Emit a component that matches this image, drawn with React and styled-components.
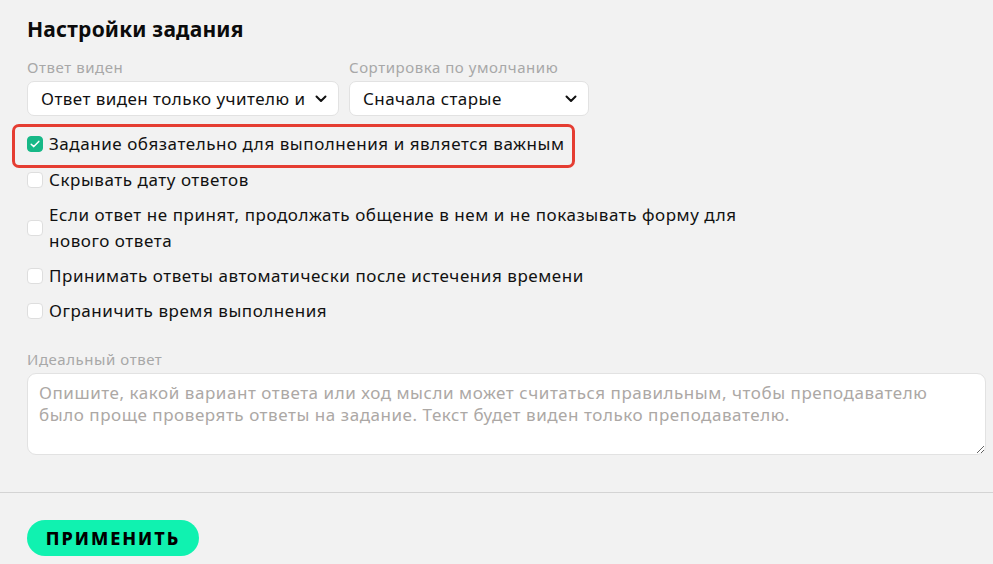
import React from 'react'
import styled, { createGlobalStyle } from "styled-components";

const GlobalStyle = createGlobalStyle`
    html, body {
        margin: 0;
        padding: 0;
        background: #f2f2f2;
    }
    body {
        font-family: "Noto Sans", "Open Sans", sans-serif;
        color: #111;
    }
`

const options = [
    { text: "Скрывать дату ответов" },
    { text: "Если ответ не принят, продолжать общение в нем и не показывать форму для нового ответа" },
    { text: "Принимать ответы автоматически после истечения времени" },
    { text: "Ограничить время выполнения" },
]

function Chevron() {
    return (
        <svg width="12" height="8" viewBox="0 0 12 8" fill="none">
            <path d="M1.5 1.5L6 6l4.5-4.5" stroke="#111" strokeWidth="2" strokeLinecap="round" strokeLinejoin="round" />
        </svg>
    )
}

function Check({ checked }) {
    return (
        <Box $checked={checked}>
            {checked && (
                <svg width="10" height="8" viewBox="0 0 10 8" fill="none">
                    <path d="M1.2 4.2L3.8 6.6 8.8 1.4" stroke="#fff" strokeWidth="1.5" strokeLinecap="round" strokeLinejoin="round" />
                </svg>
            )}
        </Box>
    )
}

function App() {
    return (
        <Page>
            <GlobalStyle />
            <Content>
                <Title>Настройки задания</Title>
                <Selects>
                    <Field>
                        <Label>Ответ виден</Label>
                        <Select $width={312}>
                            <span>Ответ виден только учителю и</span>
                            <Chevron />
                        </Select>
                    </Field>
                    <Field>
                        <Label>Сортировка по умолчанию</Label>
                        <Select $width={240}>
                            <span>Сначала старые</span>
                            <Chevron />
                        </Select>
                    </Field>
                </Selects>
                <Highlight>
                    <Option>
                        <Check checked />
                        <OptionText>Задание обязательно для выполнения и является важным</OptionText>
                    </Option>
                </Highlight>
                <OptionList>
                    {options.map((o) => (
                        <Option key={o.text}>
                            <Check />
                            <OptionText>{o.text}</OptionText>
                        </Option>
                    ))}
                </OptionList>
                <IdealField>
                    <Label>Идеальный ответ</Label>
                    <TextArea placeholder="Опишите, какой вариант ответа или ход мысли может считаться правильным, чтобы преподавателю было проще проверять ответы на задание. Текст будет виден только преподавателю." />
                </IdealField>
            </Content>
            <Footer>
                <ApplyButton>Применить</ApplyButton>
            </Footer>
        </Page>
    )
}

const Page = styled.div`
    width: 993px;
    height: 564px;
    overflow: hidden;
    background: #f2f2f2;
`

const Content = styled.div`
    padding: 14px 7px 0 27px;
    display: flex;
    flex-direction: column;
`

const Title = styled.h1`
    margin: 0;
    font-size: 21px;
    font-weight: 700;
    line-height: 30px;
    color: #0b0b0b;
    letter-spacing: 0.2px;
`

const Selects = styled.div`
    display: flex;
    gap: 10px;
    margin-top: 14px;
`

const Field = styled.div`
    display: flex;
    flex-direction: column;
    gap: 5px;
`

const Label = styled.div`
    font-size: 15px;
    line-height: 18px;
    color: #a8a8a8;
    letter-spacing: 0.55px;
`

const Select = styled.div`
    box-sizing: border-box;
    width: ${(p) => p.$width}px;
    height: 35px;
    background: #fff;
    border: 1px solid #e2e2e2;
    border-radius: 7px;
    display: flex;
    align-items: center;
    justify-content: space-between;
    gap: 10px;
    padding: 0 11px 0 13px;
    font-size: 17px;
    letter-spacing: 0.45px;
    color: #111;
    span {
        white-space: nowrap;
        overflow: hidden;
    }
`

const Highlight = styled.div`
    margin: 8px 0 0 -15px;
    width: 563px;
    box-sizing: border-box;
    height: 44px;
    border: 3px solid #e53d32;
    border-radius: 7px;
    display: flex;
    align-items: center;
    padding: 0 0 4px 12px;
`

const OptionList = styled.div`
    display: flex;
    flex-direction: column;
    gap: 9px;
    margin-top: -1px;
`

const Option = styled.label`
    display: flex;
    align-items: center;
    gap: 6px;
    max-width: 730px;
`

const Box = styled.span`
    flex: none;
    width: 16px;
    height: 16px;
    box-sizing: border-box;
    border-radius: 4px;
    background: ${(p) => (p.$checked ? "#17b887" : "#fff")};
    border: 1px solid ${(p) => (p.$checked ? "#17b887" : "#dedede")};
    display: flex;
    align-items: center;
    justify-content: center;
`

const OptionText = styled.span`
    font-size: 17px;
    line-height: 26px;
    letter-spacing: 0.55px;
    color: #111;
`

const IdealField = styled(Field)`
    margin-top: 26px;
`

const TextArea = styled.textarea`
    box-sizing: border-box;
    width: 959px;
    height: 82px;
    border: 1px solid #e2e2e2;
    border-radius: 9px;
    background: #fff;
    padding: 8px 11px 6px;
    font-family: "Noto Sans", "Open Sans", sans-serif;
    font-size: 17px;
    line-height: 22px;
    letter-spacing: 0.55px;
    resize: vertical;
    outline: none;
    &::placeholder {
        color: #aca8a5;
    }
`

const Footer = styled.div`
    margin-top: 37px;
    border-top: 1px solid #d4d4d4;
    padding: 27px 27px 0;
`

const ApplyButton = styled.button`
    width: 172px;
    height: 36px;
    border: none;
    border-radius: 18px;
    background: #10f2b0;
    color: #000;
    font-family: "Noto Sans", "Open Sans", sans-serif;
    font-size: 18px;
    font-weight: 800;
    letter-spacing: 2px;
    text-transform: uppercase;
    cursor: pointer;
`

export default App
